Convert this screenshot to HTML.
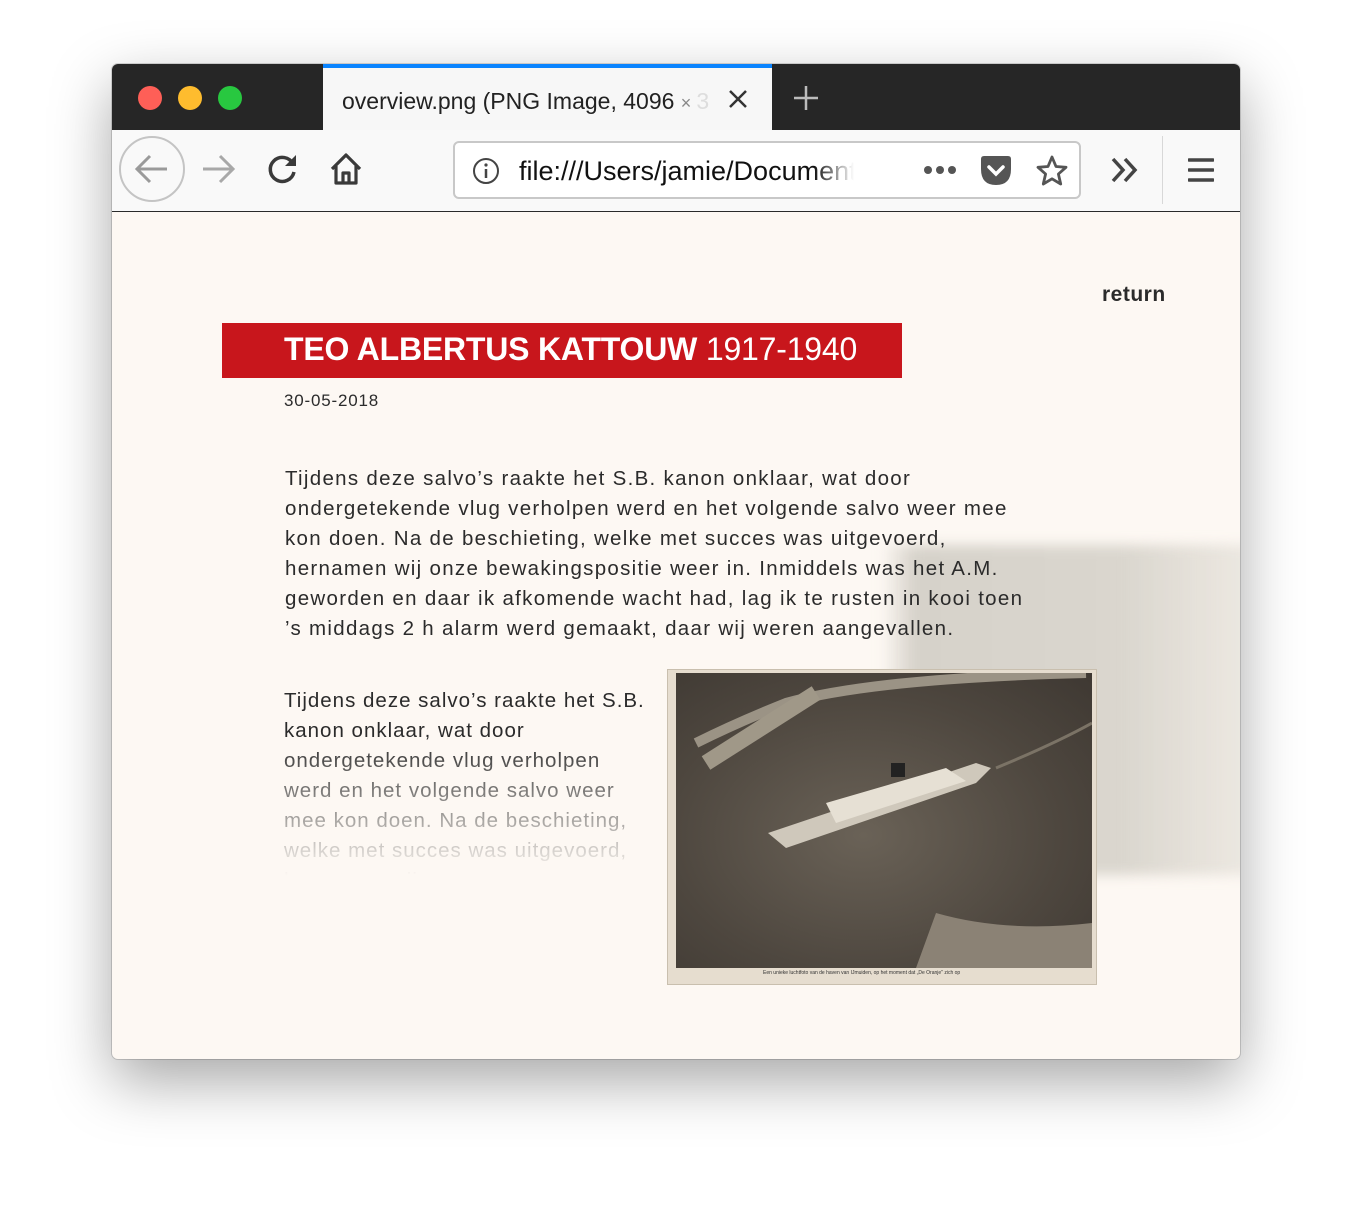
<!DOCTYPE html>
<html><head><meta charset="utf-8"><style>
*{margin:0;padding:0;box-sizing:border-box}
body{width:1352px;height:1220px;background:#fff;font-family:"Liberation Sans",sans-serif;position:relative;overflow:hidden}
.win{position:absolute;left:112px;top:64px;width:1128px;height:995px;border-radius:6px;overflow:hidden;box-shadow:0 22px 60px rgba(0,0,0,.35),0 0 0 1px rgba(0,0,0,.15);background:#fdf8f3}
.title{position:absolute;left:0;top:0;width:1128px;height:66px;background:#262626}
.dot{position:absolute;top:22px;width:24px;height:24px;border-radius:50%}
.tab{position:absolute;left:211px;top:0;width:449px;height:66px;background:#f7f7f7;border-top:4px solid #0a84ff}
.tab span{position:absolute;left:19px;top:20px;font-size:23px;color:#222;white-space:nowrap}
.tool{position:absolute;left:0;top:66px;width:1128px;height:82px;background:#f9f9f9;border-bottom:1px solid #2a2a2a}
.url{position:absolute;left:341px;top:11px;width:628px;height:58px;background:#fff;border:2px solid #c8c8c8;border-radius:6px}
.content{position:absolute;left:0;top:149px;width:1128px;height:846px}
p{font-size:20.5px;line-height:30px;color:#2b2b2b;position:absolute;white-space:nowrap;letter-spacing:1.3px}
</style></head><body>
<div class="win">
<div class="title">
 <div class="dot" style="left:26px;background:#fe5f57"></div>
 <div class="dot" style="left:66px;background:#febc2e"></div>
 <div class="dot" style="left:106px;background:#28c840"></div>
 <div class="tab"><span>overview.png (PNG Image, 4096 <span style="position:static;color:#888;font-size:18px">× </span><span style="position:static;color:#ddd">3</span></span>
  <svg style="position:absolute;left:404px;top:20px" width="22" height="22" viewBox="0 0 22 22"><path d="M3 3L19 19M19 3L3 19" stroke="#333" stroke-width="2.5"/></svg></div>
 <svg style="position:absolute;left:680px;top:20px" width="28" height="28" viewBox="0 0 28 28"><path d="M14 2V26M2 14H26" stroke="#bbb" stroke-width="2.5"/></svg>
</div>
<div class="tool">
 <div style="position:absolute;left:7px;top:6px;width:66px;height:66px;border-radius:50%;border:2px solid #c4c4c4;background:#f9f9f9"></div>
 <svg style="position:absolute;left:22px;top:22px" width="36" height="34" viewBox="0 0 36 34"><path d="M33 17H4M16 4L3 17L16 30" stroke="#9a9a9a" stroke-width="3" fill="none"/></svg>
 <svg style="position:absolute;left:88px;top:22px" width="36" height="34" viewBox="0 0 36 34"><path d="M3 17H32M20 4L33 17L20 30" stroke="#a8a8a8" stroke-width="3" fill="none"/></svg>
 <svg style="position:absolute;left:154px;top:22px" width="34" height="34" viewBox="0 0 34 34"><path d="M27 12A12 12 0 1 0 28 20" stroke="#3a3a3a" stroke-width="3.5" fill="none"/><path d="M30 3V14H19Z" fill="#3a3a3a"/></svg>
 <svg style="position:absolute;left:216px;top:21px" width="36" height="36" viewBox="0 0 36 36"><path d="M4 18L18 4L32 18M8 15V32H28V15M15 32V22H21V32" stroke="#3a3a3a" stroke-width="3.2" fill="none" stroke-linejoin="round"/></svg>
 <div class="url">
  <svg style="position:absolute;left:17px;top:14px" width="28" height="28" viewBox="0 0 28 28"><circle cx="14" cy="14" r="12" stroke="#444" stroke-width="2" fill="none"/><path d="M14 12V21" stroke="#444" stroke-width="2.5"/><circle cx="14" cy="8" r="1.6" fill="#444"/></svg>
  <span style="position:absolute;left:64px;top:13px;font-size:27px;color:#111;white-space:nowrap;width:335px;overflow:hidden;-webkit-mask-image:linear-gradient(90deg,#000 88%,transparent)">file:///Users/jamie/Documents</span>
  <svg style="position:absolute;left:468px;top:22px" width="34" height="10"><circle cx="5" cy="5" r="4" fill="#555"/><circle cx="17" cy="5" r="4" fill="#555"/><circle cx="29" cy="5" r="4" fill="#555"/></svg>
  <svg style="position:absolute;left:524px;top:12px" width="34" height="32" viewBox="0 0 34 32"><path d="M2 4Q2 1 5 1H29Q32 1 32 4V14Q32 30 17 30Q2 30 2 14Z" fill="#555"/><path d="M10 12L17 19L24 12" stroke="#fff" stroke-width="3.5" fill="none" stroke-linecap="round"/></svg>
  <svg style="position:absolute;left:580px;top:11px" width="34" height="34" viewBox="0 0 34 34"><path d="M17 3L21 12.5L31 13.3L23.4 20L25.7 30L17 24.8L8.3 30L10.6 20L3 13.3L13 12.5Z" stroke="#555" stroke-width="2.8" fill="none" stroke-linejoin="round"/></svg>
 </div>
 <svg style="position:absolute;left:998px;top:26px" width="30" height="28" viewBox="0 0 30 28"><path d="M3 3L13 14L3 25M15 3L25 14L15 25" stroke="#444" stroke-width="3.5" fill="none"/></svg>
 <div style="position:absolute;left:1050px;top:6px;width:1px;height:68px;background:#d8d8d8"></div>
 <svg style="position:absolute;left:1076px;top:27px" width="26" height="26"><path d="M1 3H25M1 13H25M1 23H25" stroke="#444" stroke-width="3.5" stroke-linecap="round"/></svg>
</div>
<div class="content">
 <div style="position:absolute;left:770px;top:332px;width:400px;height:330px;background:linear-gradient(90deg,rgba(208,203,194,0) 0%,#d6d2ca 8%,#dad6ce 60%,rgba(230,226,218,.5) 100%);filter:blur(6px)"></div>
 <div style="position:absolute;left:990px;top:70px;font-size:21px;font-weight:bold;color:#2b2b2b;letter-spacing:0.5px">return</div>
 <div style="position:absolute;left:110px;top:110px;width:680px;height:55px;background:#c8161c"></div>
 <div style="position:absolute;left:172px;top:118px;font-size:32px;color:#fff;white-space:nowrap;letter-spacing:-0.2px"><b>TEO ALBERTUS KATTOUW</b> 1917-1940</div>
 <div style="position:absolute;left:172px;top:178px;font-size:17px;color:#2b2b2b;letter-spacing:0.8px">30-05-2018</div>
 <p style="left:173px;top:251px">Tijdens deze salvo’s raakte het S.B. kanon onklaar, wat door<br>ondergetekende vlug verholpen werd en het volgende salvo weer mee<br>kon doen. Na de beschieting, welke met succes was uitgevoerd,<br>hernamen wij onze bewakingspositie weer in. Inmiddels was het A.M.<br>geworden en daar ik afkomende wacht had, lag ik te rusten in kooi toen<br>’s middags 2 h alarm werd gemaakt, daar wij weren aangevallen.</p>
 <p style="left:172px;top:473px;width:380px;height:200px;overflow:hidden;-webkit-mask-image:linear-gradient(180deg,#000 25%,rgba(0,0,0,.15) 85%,transparent 95%);letter-spacing:1px">Tijdens deze salvo’s raakte het S.B.<br>kanon onklaar, wat door<br>ondergetekende vlug verholpen<br>werd en het volgende salvo weer<br>mee kon doen. Na de beschieting,<br>welke met succes was uitgevoerd,<br>hernamen wij onze</p>
 <div style="position:absolute;left:555px;top:456px;width:430px;height:316px;background:#e6ddcf;border:1px solid #c9bfae">
  <div style="position:absolute;left:8px;top:3px;width:416px;height:295px;background:radial-gradient(ellipse at 45% 55%,#6a6257 0%,#4e473f 60%,#3e3832 100%)">
   <svg width="416" height="295" viewBox="0 0 416 295"><path d="M20 70Q60 50 110 30Q200 5 410 0" stroke="#9b9385" stroke-width="10" fill="none"/><path d="M30 90L140 20" stroke="#a09888" stroke-width="16"/><path d="M92 160L300 90L315 95L300 110L110 175Z" fill="#cfc8bb"/><path d="M150 130L270 95L290 108L160 150Z" fill="#e6e0d4"/><rect x="215" y="90" width="14" height="14" fill="#222"/><path d="M320 95Q380 70 416 50" stroke="#7b7366" stroke-width="3" fill="none"/><path d="M260 240Q330 260 416 250V295H240Z" fill="#8b8275"/></svg>
  </div>
  <div style="position:absolute;left:95px;top:300px;font-size:5px;color:#333">Een unieke luchtfoto van de haven van IJmuiden, op het moment dat „De Oranje" zich op</div>
 </div>
</div>
</div>
</body></html>
